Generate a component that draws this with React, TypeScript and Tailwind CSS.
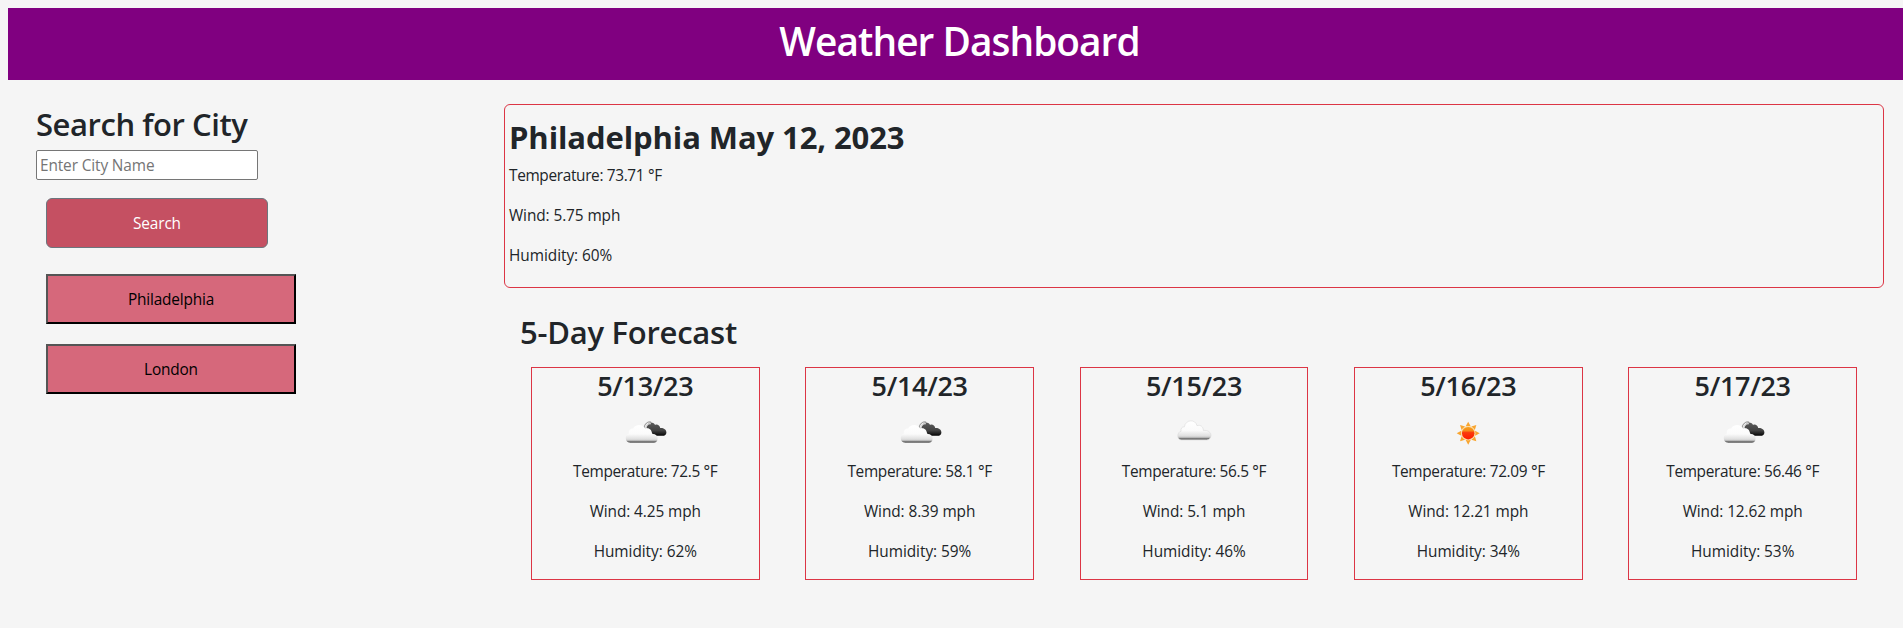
import React from "react";

type Sky = "broken" | "overcast" | "clear";

interface Day {
  date: string;
  sky: Sky;
  temp: string;
  wind: string;
  humidity: string;
}

const days: Day[] = [
  { date: "5/13/23", sky: "broken", temp: "72.5", wind: "4.25", humidity: "62" },
  { date: "5/14/23", sky: "broken", temp: "58.1", wind: "8.39", humidity: "59" },
  { date: "5/15/23", sky: "overcast", temp: "56.5", wind: "5.1", humidity: "46" },
  { date: "5/16/23", sky: "clear", temp: "72.09", wind: "12.21", humidity: "34" },
  { date: "5/17/23", sky: "broken", temp: "56.46", wind: "12.62", humidity: "53" },
];

const cities = ["Philadelphia", "London"];

function WeatherIcon({ sky, id }: { sky: Sky; id: string }) {
  const light = `light-${id}`;
  const dark = `dark-${id}`;
  const sun = `sun-${id}`;
  return (
    <svg width="50" height="50" viewBox="0 0 50 50" className="block">
      <defs>
        <linearGradient id={light} x1="0" y1="0" x2="0" y2="1">
          <stop offset="0" stopColor="#ffffff" />
          <stop offset="0.5" stopColor="#fbfbfb" />
          <stop offset="0.8" stopColor="#dedede" />
          <stop offset="0.87" stopColor="#b8b8b8" />
          <stop offset="0.93" stopColor="#707070" />
          <stop offset="1" stopColor="#8a8a8a" />
        </linearGradient>
        <linearGradient id={dark} x1="0" y1="0" x2="0" y2="1">
          <stop offset="0" stopColor="#5c5c5c" />
          <stop offset="0.6" stopColor="#424242" />
          <stop offset="0.85" stopColor="#1c1c1c" />
          <stop offset="1" stopColor="#000000" />
        </linearGradient>
        <linearGradient id={sun} x1="0" y1="0" x2="0" y2="1">
          <stop offset="0" stopColor="#f7a01c" />
          <stop offset="0.3" stopColor="#f58a18" />
          <stop offset="0.45" stopColor="#fb3a0c" />
          <stop offset="1" stopColor="#fc1c00" />
        </linearGradient>
      </defs>
      {sky === "broken" && (
        <g transform="translate(0.6 0.4)">
          <path
            d="M27 17 C28 14.5 32.5 14 34.5 17.5 C36.5 16.5 39.2 18 39.6 20.6 C42.5 20.2 45.8 21.8 45.8 25 C45.8 27.4 44 28.4 42 28.4 L34 28.4 L25.5 20 Z"
            fill={`url(#${dark})`}
          />
          <path d="M23.4 21 C23.8 16.5 27 13.6 30.6 14.8" fill="none" stroke="#777" strokeWidth="0.9" />
          <path d="M25 21.5 C25.5 18 27.4 16 30.2 16.3" fill="none" stroke="#d8d8d8" strokeWidth="1.4" />
          <path
            d="M10 35.5 C7 35.5 5.2 33.4 5.2 30.6 C5.2 28.3 6.4 26.6 8.3 26 C7.8 22.6 10.3 20.8 12.6 21.1 C14 17.3 22 15.6 24.6 21.4 C27.6 19.6 31.6 21.9 31.4 26.6 C34.6 26.2 37 28.3 37 31 C37 33.8 35.2 35.5 32.8 35.5 Z"
            fill={`url(#${light})`}
          />
        </g>
      )}
      {sky === "overcast" && (
        <path
          d="M12.8 33 C10.2 33 8.8 31.3 8.8 29 C8.8 26.6 10 24.6 12.1 24.2 C11.4 21.3 13.2 19.6 15.4 19.8 C16.4 12.5 26.4 11.6 28 18.7 C31 17.4 34.4 19.4 34.4 23.5 C38.6 22.8 42 25.2 42 28.3 C42 31 40.1 33 37.6 33 Z"
          fill={`url(#${light})`}
          stroke="#dadada"
          strokeWidth="0.6"
        />
      )}
      {sky === "clear" && (
        <g transform="translate(0 0.7)">
          {[0, 45, 90, 135, 180, 225, 270, 315].map((angle) => (
            <path key={angle} d="M25.2 14 L27.7 18.6 L22.7 18.6 Z" fill="#f9a52f" transform={`rotate(${angle} 25.2 25.5)`} />
          ))}
          <circle cx="25.2" cy="25.5" r="7.2" fill="#fbd9a0" />
          <circle cx="25.2" cy="25.5" r="6.2" fill={`url(#${sun})`} />
        </g>
      )}
    </svg>
  );
}

function Stats({ temp, wind, humidity }: { temp: string; wind: string; humidity: string }) {
  return (
    <div className="flex flex-col gap-4 text-[15.4px] leading-6">
      <p className="tracking-[-0.34px]">Temperature: {temp} °F</p>
      <p className="tracking-[-0.09px]">Wind: {wind} mph</p>
      <p className="tracking-[-0.04px]">Humidity: {humidity}%</p>
    </div>
  );
}

export default function App() {
  return (
    <div className="min-h-screen overflow-hidden bg-[#f5f5f5] pt-2 pl-2 font-['Open_Sans','Noto_Sans',sans-serif] text-[#212529]">
      <header className="-mr-2 flex h-[72px] justify-center bg-[#800080] pt-[9px]">
        <h1 className="text-[38.8px] leading-[48px] font-semibold tracking-[-0.95px] text-white">Weather Dashboard</h1>
      </header>

      <div className="flex pt-6 pr-[19px] pl-7">
        <aside className="flex w-[468px] shrink-0 flex-col items-start">
          <h2 className="pt-px text-[31px] leading-[38px] font-semibold tracking-[-0.45px]">Search for City</h2>
          <input
            type="text"
            placeholder="Enter City Name"
            className="mt-[7px] h-[30px] w-[222px] rounded-[2px] border border-[#767676] bg-white px-[3px] text-[15.4px] tracking-[-0.12px] placeholder:text-[#757575]"
          />
          <button className="mt-[18px] ml-2.5 h-[50px] w-[222px] rounded-md border border-[#6c757d] bg-[#c55062] pt-0.5 text-[15.4px] tracking-[-0.15px] text-white">
            Search
          </button>
          <div className="mt-[26px] ml-2.5 flex flex-col gap-5">
            {cities.map((city) => (
              <button
                key={city}
                className="h-[50px] w-[250px] border-2 border-t-[#555] border-r-black border-b-black border-l-[#555] bg-[#d6687b] pt-0.5 text-[15.4px] tracking-[-0.18px] text-black"
              >
                {city}
              </button>
            ))}
          </div>
        </aside>

        <main className="flex-1">
          <section className="h-[184px] rounded-md border border-[#dc3545] px-1 pt-[13px]">
            <h2 className="mb-2 text-[31px] leading-[38px] font-bold tracking-[-0.1px]">Philadelphia May 12, 2023</h2>
            <Stats temp="73.71" wind="5.75" humidity="60" />
          </section>

          <section className="pt-[25px] pl-4">
            <h2 className="text-[31px] leading-[38px] font-semibold tracking-[-0.25px]">5-Day Forecast</h2>
            <div className="mt-4 flex justify-between pr-[27px] pl-[11px]">
              {days.map((day, i) => (
                <article
                  key={day.date}
                  className="flex h-[213px] w-[228.6px] flex-col items-center border border-[#dc3545] text-center"
                >
                  <h3 className="pt-px text-[27px] leading-[34px] font-semibold tracking-[-0.3px]">{day.date}</h3>
                  <div className="mt-1 mb-[3px]">
                    <WeatherIcon sky={day.sky} id={String(i)} />
                  </div>
                  <Stats temp={day.temp} wind={day.wind} humidity={day.humidity} />
                </article>
              ))}
            </div>
          </section>
        </main>
      </div>
    </div>
  );
}
